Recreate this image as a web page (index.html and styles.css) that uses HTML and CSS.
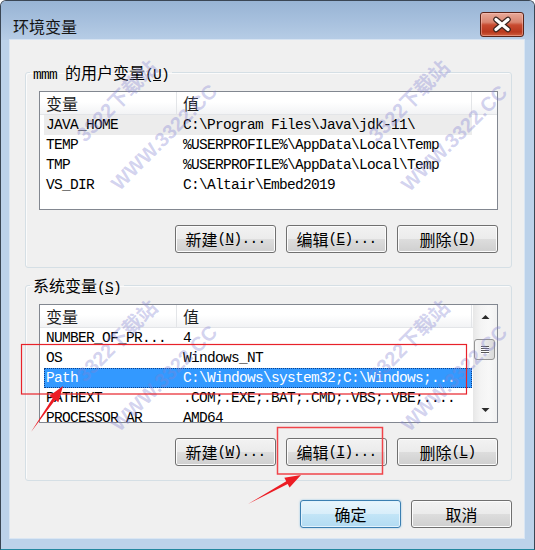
FILE: index.html
```html
<!DOCTYPE html>
<html lang="zh-CN">
<head>
<meta charset="utf-8">
<title>环境变量</title>
<link rel="stylesheet" href="styles.css">
</head>
<body>
<div class="window">
  <div class="titlebar">
    <span class="title">环境变量</span>
    <button class="close" aria-label="关闭">
      <svg width="20" height="17" viewBox="0 0 20 17"><path d="M4 3.5 L16 13.5 M16 3.5 L4 13.5" stroke="#3a2520" stroke-width="5.6" stroke-linecap="round" fill="none"/><path d="M4 3.5 L16 13.5 M16 3.5 L4 13.5" stroke="#ffffff" stroke-width="3.2" stroke-linecap="round" fill="none"/></svg>
    </button>
  </div>
  <div class="client">
    <fieldset class="group">
      <legend>mmm <span class="zh">的用户变量</span>(<u>U</u>)</legend>
      <div class="list">
        <div class="list-body">
          <div class="hdr"><div class="hc c1"><span class="zh">变量</span></div><div class="hc c2"><span class="zh">值</span></div><div class="hc c3"></div></div>
          <div class="row dim"><span class="cell n">JAVA_HOME</span><span class="cell v">C:\Program Files\Java\jdk-11\</span></div>
          <div class="row"><span class="cell n">TEMP</span><span class="cell v">%USERPROFILE%\AppData\Local\Temp</span></div>
          <div class="row"><span class="cell n">TMP</span><span class="cell v">%USERPROFILE%\AppData\Local\Temp</span></div>
          <div class="row"><span class="cell n">VS_DIR</span><span class="cell v">C:\Altair\Embed2019</span></div>
        </div>
      </div>
      <div class="btns">
        <button class="btn"><span class="zh">新建</span>(<u>N</u>)...</button>
        <button class="btn"><span class="zh">编辑</span>(<u>E</u>)...</button>
        <button class="btn"><span class="zh">删除</span>(<u>D</u>)</button>
      </div>
    </fieldset>

    <fieldset class="group">
      <legend><span class="zh">系统变量</span>(<u>S</u>)</legend>
      <div class="list">
        <div class="list-body">
          <div class="hdr"><div class="hc c1"><span class="zh">变量</span></div><div class="hc c2"><span class="zh">值</span></div><div class="hc c3"></div></div>
          <div class="row"><span class="cell n">NUMBER_OF_PR...</span><span class="cell v">4</span></div>
          <div class="row"><span class="cell n">OS</span><span class="cell v">Windows_NT</span></div>
          <div class="row sel"><span class="cell n">Path</span><span class="cell v">C:\Windows\system32;C:\Windows;...</span></div>
          <div class="row"><span class="cell n">PATHEXT</span><span class="cell v">.COM;.EXE;.BAT;.CMD;.VBS;.VBE;....</span></div>
          <div class="row"><span class="cell n">PROCESSOR_AR</span><span class="cell v">AMD64</span></div>
        </div>
        <div class="vscroll">
          <div class="sb-btn"><svg width="9" height="6" viewBox="0 0 9 6"><polygon points="0.5,5 4.5,1 8.5,5" fill="#2b2b2b"/></svg></div>
          <div class="sb-track">
            <div class="thumb"><svg width="8" height="8" viewBox="0 0 8 8"><path d="M0 0.5H8M0 2.5H8M0 4.5H8M0 6.5H8" stroke="#5a5a5a" stroke-width="1"/><path d="M0 1.5H8M0 3.5H8M0 5.5H8M0 7.5H8" stroke="#ffffff" stroke-width="1"/></svg></div>
          </div>
          <div class="sb-btn"><svg width="9" height="6" viewBox="0 0 9 6"><polygon points="0.5,1 8.5,1 4.5,5" fill="#2b2b2b"/></svg></div>
        </div>
      </div>
      <div class="btns">
        <button class="btn"><span class="zh">新建</span>(<u>W</u>)...</button>
        <button class="btn"><span class="zh">编辑</span>(<u>I</u>)...</button>
        <button class="btn"><span class="zh">删除</span>(<u>L</u>)</button>
      </div>
    </fieldset>

    <div class="footer">
      <button class="btn default"><span class="zh">确定</span></button>
      <button class="btn"><span class="zh">取消</span></button>
    </div>
  </div>

  <span class="wm wm1">3322下载站</span>
  <span class="wm wm2">WWW.3322.CC</span>
  <span class="wm wm3">3322下载站</span>
  <span class="wm wm4">WWW.3322.CC</span>
  <span class="wm wm5">3322下载站</span>
  <span class="wm wm6">WWW.3322.CC</span>
  <span class="wm wm7">3322下载站</span>
  <span class="wm wm8">WWW.3322.CC</span>

  <svg class="marks" width="535" height="550" viewBox="0 0 535 550">
    <rect x="21.5" y="344.5" width="445" height="49.5" fill="none" stroke="#e8222a" stroke-width="1.2"/>
    <rect x="277.5" y="427.5" width="105" height="46.5" fill="none" stroke="#f0444a" stroke-width="1.5"/>
    <polygon points="31,432 55.09,400 58.38,402.28 63,386 49.34,396 52.63,398.28" fill="#ec1c24"/>
    <polygon points="248,504 287.68,484 289.6,487.5 301,475 284.32,477.86 286.24,481.36" fill="#ec1c24"/>
  </svg>
</div>
</body>
</html>
```

FILE: styles.css
```css
* { box-sizing: border-box; }
html, body { margin: 0; padding: 0; }
body {
  width: 535px;
  height: 550px;
  overflow: hidden;
  background: #ffffff;
  font-family: "Liberation Mono", "Noto Sans CJK SC", monospace;
}

.window {
  position: relative;
  width: 535px;
  height: 550px;
  display: flex;
  flex-direction: column;
  background: #bcd2ea;
  border: 1px solid #3a4654;
  border-bottom-color: #23879f;
  border-radius: 6px 6px 0 0;
  overflow: hidden;
}

.titlebar {
  height: 39px;
  flex: none;
  display: flex;
  justify-content: space-between;
  align-items: flex-start;
  padding: 0 10px 0 12px;
  background: linear-gradient(#98b4d4, #a8c1de 55%, #b7cde6);
}
.title {
  margin-top: 15px;
  font: 16px/20px "Noto Sans CJK SC", sans-serif;
  color: #141414;
}
.close {
  margin-top: 11px;
  width: 44px;
  height: 25px;
  padding: 0;
  border: 1px solid #5b2419;
  border-radius: 3px;
  background: linear-gradient(#e8a999 0%, #da8671 40%, #c84b31 52%, #b9391f 82%, #d0603f 100%);
  box-shadow: inset 0 0 0 1px rgba(255, 205, 195, 0.45);
  display: flex;
  align-items: center;
  justify-content: center;
}

.client {
  flex: 1;
  margin: 0 10px 11px 9px;
  background: #f0f0f0;
  padding: 24px 12px 0 15px;
  display: flex;
  flex-direction: column;
  font-size: 14.5px;
  letter-spacing: -0.7px;
  color: #000;
  box-shadow: 0 0 0 1px rgba(255, 255, 255, 0.45);
}

.zh {
  font-family: "Noto Sans CJK SC", sans-serif;
  font-size: 16px;
  letter-spacing: 0;
}

.group {
  margin: 0;
  padding: 11px 13px 14px 13px;
  border: 1px solid #d5dfe5;
  border-radius: 3px;
  min-width: 0;
  box-shadow: inset 1px 1px 0 #fbfbfb;
}
.group + .group { margin-top: 9px; }
.group legend {
  margin-left: -9px;
  padding: 0 3px;
  height: 16px;
  line-height: 16px;
}

.list {
  height: 119px;
  border: 1px solid #828790;
  background: #fff;
  display: flex;
  overflow: hidden;
}
.list-body {
  flex: 1;
  min-width: 0;
  overflow: hidden;
}
.hdr {
  display: flex;
  height: 23px;
  border-bottom: 1px solid #e3e5e8;
  background: linear-gradient(#ffffff 0%, #ffffff 45%, #f2f3f5 100%);
}
.hc {
  height: 22px;
  line-height: 22px;
  padding-left: 6px;
  border-right: 1px solid #e3e5e8;
  color: #1e1e1e;
}
.c1 { width: 137px; flex: none; }
.c2 { width: 295px; flex: none; }
.c3 { flex: 1; border-right: 0; }

.row {
  display: flex;
  height: 20px;
  line-height: 20px;
  margin-left: 4px;
  width: 428px;
  white-space: pre;
}
.cell { overflow: hidden; }
.n { width: 133px; flex: none; padding-left: 2px; }
.v { flex: 1; padding-left: 6px; }
.row.dim { background: #ececec; }
.row.sel {
  background: #3399ff;
  color: #fff;
  outline: 1px dotted #0d3f8a;
  outline-offset: -1px;
}

.vscroll {
  width: 24px;
  flex: none;
  display: flex;
  flex-direction: column;
  border-left: 1px solid #e8e8e8;
  background: linear-gradient(to right, #e9e9e9, #f4f4f4 30%, #f8f8f8 65%, #f1f1f1);
}
.sb-btn {
  height: 24px;
  flex: none;
  display: flex;
  align-items: center;
  justify-content: center;
}
.sb-track { flex: 1; }
.thumb {
  margin-top: 10px;
  width: 21px;
  height: 21px;
  border: 1px solid #959595;
  border-radius: 3px;
  background: linear-gradient(to right, #f6f6f6, #e9e9e9 50%, #dadada);
  display: flex;
  align-items: center;
  justify-content: center;
}

.btns {
  display: flex;
  justify-content: flex-end;
  gap: 10px;
  margin-top: 15px;
}
.footer {
  display: flex;
  justify-content: flex-end;
  gap: 10px;
  margin-top: 19px;
}
.btn {
  width: 101px;
  height: 28px;
  padding: 0;
  border: 1px solid #707070;
  border-radius: 3px;
  background: linear-gradient(#f2f2f2, #ebebeb 50%, #dddddd 50%, #cfcfcf);
  box-shadow: inset 0 0 0 1px #fcfcfc;
  font: inherit;
  letter-spacing: inherit;
  color: #000;
  display: flex;
  align-items: center;
  justify-content: center;
  white-space: pre;
}
.btn.default {
  border-color: #3c7fb1;
  background: linear-gradient(#e9f5fc, #d8eefa 50%, #c3e5f7 50%, #b2dbf2);
  box-shadow: inset 0 0 0 1px #e2f3fd, 0 0 2px rgba(60, 160, 220, 0.6);
}

.wm {
  position: absolute;
  transform: translate(-50%, -50%) rotate(-45deg);
  font: bold 20px/1 "Liberation Sans", "Noto Sans CJK SC", sans-serif;
  color: rgba(130, 130, 210, 0.36);
  white-space: nowrap;
  pointer-events: none;
}
.wm1 { left: 116px; top: 100px; }
.wm2 { left: 163px; top: 136px; }
.wm3 { left: 408px; top: 100px; }
.wm4 { left: 453px; top: 137px; }
.wm5 { left: 116px; top: 340px; }
.wm6 { left: 163px; top: 377px; }
.wm7 { left: 408px; top: 340px; }
.wm8 { left: 453px; top: 377px; }

.marks {
  position: absolute;
  left: -1px;
  top: -1px;
  pointer-events: none;
}
```
